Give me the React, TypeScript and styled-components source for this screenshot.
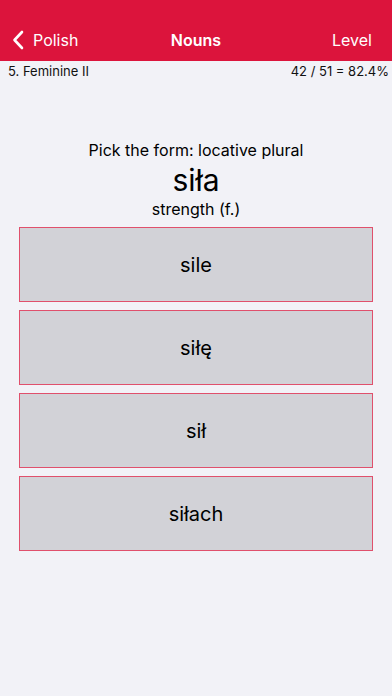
import styled, { createGlobalStyle } from 'styled-components'

const GlobalStyle = createGlobalStyle`
  html, body {
    margin: 0;
    padding: 0;
    background: #f2f2f7;
    font-family: Inter, "Liberation Sans", sans-serif;
  }
`

const Page = styled.div`
  display: flex;
  flex-direction: column;
  width: 392px;
  min-height: 696px;
  background: #f2f2f7;
`

const NavBar = styled.div`
  display: grid;
  grid-template-columns: 1fr auto 1fr;
  align-items: center;
  height: 61px;
  padding: 19px 12px 0 12px;
  box-sizing: border-box;
  background: #dc143c;
  color: #fff;
`

const BackButton = styled.div`
  display: flex;
  align-items: center;
  gap: 9px;
  font-size: 16px;
`

const Title = styled.div`
  font-size: 16px;
  font-weight: 600;
`

const RightAction = styled.div`
  justify-self: end;
  padding-right: 8px;
  font-size: 16px;
`

const InfoRow = styled.div`
  display: flex;
  justify-content: space-between;
  height: 18px;
  padding: 2px 3px 0 8px;
  box-sizing: border-box;
  font-size: 13px;
  color: #111;
`

const Prompt = styled.div`
  display: flex;
  flex-direction: column;
  align-items: center;
  margin-top: 60px;
  color: #000;
`

const Question = styled.div`
  font-size: 16px;
  line-height: 22px;
`

const Word = styled.div`
  font-size: 30px;
  line-height: 38px;
`

const Meaning = styled.div`
  font-size: 16px;
  line-height: 20px;
`

const Choices = styled.div`
  display: flex;
  flex-direction: column;
  gap: 8px;
  padding: 8px 19px 0 19px;
`

const Choice = styled.button`
  display: flex;
  align-items: center;
  justify-content: center;
  height: 75px;
  background: #d2d2d7;
  border: 1px solid #e0506c;
  font-family: inherit;
  font-size: 20px;
  color: #000;
  padding: 0;
`

const choices = ['sile', 'siłę', 'sił', 'siłach']

export default function App() {
  return (
    <>
      <GlobalStyle />
      <Page>
        <NavBar>
          <BackButton>
            <svg width="12" height="20" viewBox="0 0 12 20">
              <path
                d="M10 2 L2.5 10 L10 18"
                fill="none"
                stroke="#fff"
                strokeWidth="2.6"
                strokeLinecap="round"
                strokeLinejoin="round"
              />
            </svg>
            Polish
          </BackButton>
          <Title>Nouns</Title>
          <RightAction>Level</RightAction>
        </NavBar>
        <InfoRow>
          <span>5. Feminine II</span>
          <span>42 / 51 = 82.4%</span>
        </InfoRow>
        <Prompt>
          <Question>Pick the form: locative plural</Question>
          <Word>siła</Word>
          <Meaning>strength (f.)</Meaning>
        </Prompt>
        <Choices>
          {choices.map((c) => (
            <Choice key={c}>{c}</Choice>
          ))}
        </Choices>
      </Page>
    </>
  )
}
